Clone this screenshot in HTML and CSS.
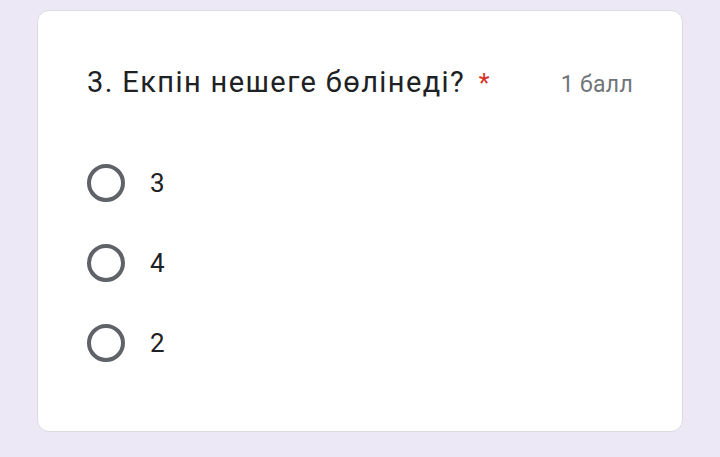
FILE: index.html
```html
<!DOCTYPE html>
<html lang="kk">
<head>
  <meta charset="UTF-8">
  <meta name="viewport" content="width=device-width, initial-scale=1.0">
  <title>Сұрақ</title>
  <link rel="stylesheet" href="styles.css">
</head>
<body>
  <div class="card">
    <div class="question">
      <div class="title">3. Екпін нешеге бөлінеді? <span class="req">*</span></div>
      <div class="points">1 балл</div>
    </div>
    <div class="options">
      <label class="option"><span class="radio"></span><span class="text">3</span></label>
      <label class="option"><span class="radio"></span><span class="text">4</span></label>
      <label class="option"><span class="radio"></span><span class="text">2</span></label>
    </div>
  </div>
</body>
</html>
```

FILE: styles.css
```css
body {
  margin: 0;
  padding: 10px 37px;
  background: #ece8f6;
  font-family: Roboto, 'Noto Sans', sans-serif;
}
.card {
  box-sizing: border-box;
  width: 646px;
  height: 422px;
  background: #fff;
  border: 1px solid #dadce0;
  border-radius: 12px;
  padding: 51px 49px 0;
}
.question {
  display: flex;
  justify-content: space-between;
  align-items: baseline;
  color: #202124;
}
.title {
  font-size: 29px;
  line-height: 40px;
  letter-spacing: 1.4px;
}
.req {
  color: #d93025;
  font-size: 25px;
  margin-left: 5px;
}
.points {
  font-size: 23px;
  letter-spacing: 0.3px;
  color: #70757a;
}
.options {
  margin-top: 60px;
  display: flex;
  flex-direction: column;
  gap: 42px;
}
.option {
  display: flex;
  align-items: center;
  height: 38px;
}
.radio {
  box-sizing: border-box;
  width: 38px;
  height: 38px;
  border: 4px solid #5f6368;
  border-radius: 50%;
}
.text {
  margin-left: 25px;
  font-size: 26px;
  color: #202124;
}
```
